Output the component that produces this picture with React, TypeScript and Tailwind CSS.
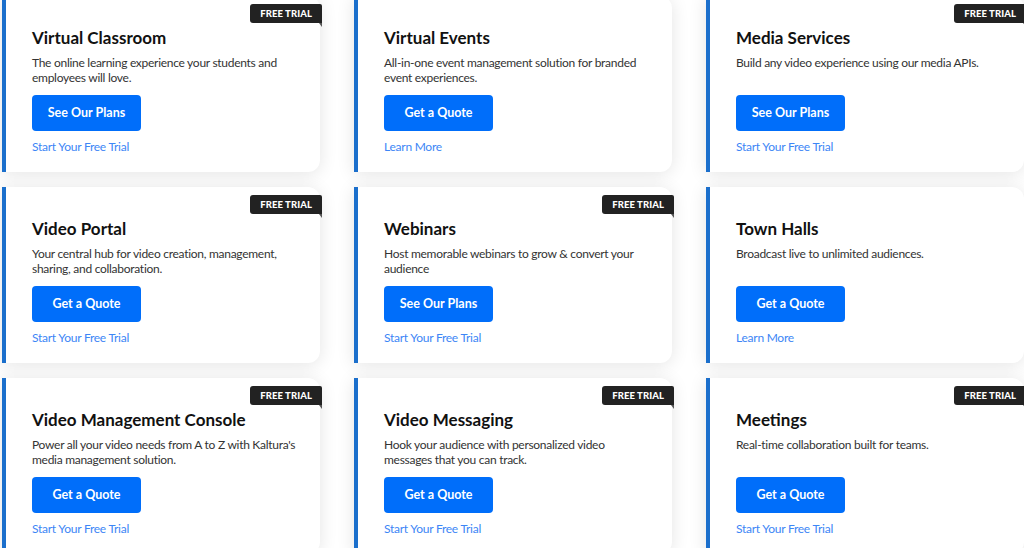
import React from 'react';

interface Product {
  title: string;
  description: string;
  cta: string;
  link: string;
  freeTrial: boolean;
}

const products: Product[] = [
  {
    title: 'Virtual Classroom',
    description: 'The online learning experience your students and employees will love.',
    cta: 'See Our Plans',
    link: 'Start Your Free Trial',
    freeTrial: true,
  },
  {
    title: 'Virtual Events',
    description: 'All-in-one event management solution for branded event experiences.',
    cta: 'Get a Quote',
    link: 'Learn More',
    freeTrial: false,
  },
  {
    title: 'Media Services',
    description: 'Build any video experience using our media APIs.',
    cta: 'See Our Plans',
    link: 'Start Your Free Trial',
    freeTrial: true,
  },
  {
    title: 'Video Portal',
    description: 'Your central hub for video creation, management, sharing, and collaboration.',
    cta: 'Get a Quote',
    link: 'Start Your Free Trial',
    freeTrial: true,
  },
  {
    title: 'Webinars',
    description: 'Host memorable webinars to grow & convert your audience',
    cta: 'See Our Plans',
    link: 'Start Your Free Trial',
    freeTrial: true,
  },
  {
    title: 'Town Halls',
    description: 'Broadcast live to unlimited audiences.',
    cta: 'Get a Quote',
    link: 'Learn More',
    freeTrial: false,
  },
  {
    title: 'Video Management Console',
    description: "Power all your video needs from A to Z with Kaltura's media management solution.",
    cta: 'Get a Quote',
    link: 'Start Your Free Trial',
    freeTrial: true,
  },
  {
    title: 'Video Messaging',
    description: 'Hook your audience with personalized video messages that you can track.',
    cta: 'Get a Quote',
    link: 'Start Your Free Trial',
    freeTrial: true,
  },
  {
    title: 'Meetings',
    description: 'Real-time collaboration built for teams.',
    cta: 'Get a Quote',
    link: 'Start Your Free Trial',
    freeTrial: true,
  },
];

const FreeTrialBadge = () => (
  <div className="absolute top-2 right-[-2px]">
    <div className="h-[19px] px-[10px] bg-[#222222] rounded-l-[3px] rounded-tr-[2px] flex items-center">
      <span className="text-[9.5px] font-black tracking-[0.1px] text-white leading-none">FREE TRIAL</span>
    </div>
    <div className="absolute right-0 top-[19px] w-0 h-0 border-t-[4px] border-t-[#555555] border-l-[3px] border-l-transparent" />
  </div>
);

const ProductCard = ({ product }: { product: Product }) => (
  <div className="relative h-[176px] bg-white border-l-4 border-[#1b6fcc] rounded-r-[12px] shadow-[0_2px_18px_rgba(0,0,0,0.11)] pl-[26px] pt-[31px]">
    {product.freeTrial && <FreeTrialBadge />}
    <h3 className="text-[17px] leading-[22px] font-bold text-[#111111]">{product.title}</h3>
    <p className="mt-[6px] h-[30px] w-[268px] text-[12px] leading-[15px] tracking-[-0.28px] text-[#333333]">
      {product.description}
    </p>
    <button className="mt-[10px] w-[109px] h-[36px] rounded-[4px] bg-[#006efa] text-white text-[12.5px] font-bold">
      {product.cta}
    </button>
    <a href="#" className="block mt-[8px] text-[12px] leading-[16px] tracking-[-0.25px] text-[#3d86f6]">
      {product.link}
    </a>
  </div>
);

export default function App() {
  return (
    <div
      className="w-[1024px] h-[548px] overflow-hidden bg-white"
      style={{ fontFamily: 'Lato, "Open Sans", sans-serif' }}
    >
      <div className="grid grid-cols-[318px_318px_318px] gap-x-[34px] gap-y-[15px] pl-[2px] -mt-[4px]">
        {products.map((p) => (
          <ProductCard key={p.title} product={p} />
        ))}
      </div>
    </div>
  );
}
